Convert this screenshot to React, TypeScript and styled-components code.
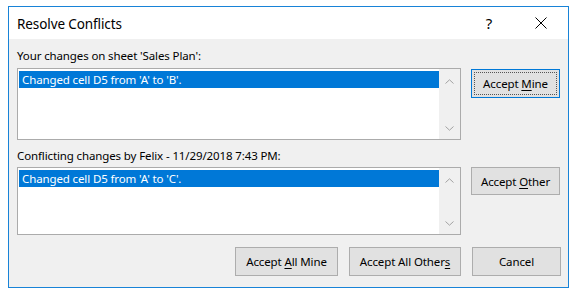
import React from "react";
import styled, { createGlobalStyle } from "styled-components";

const Global = createGlobalStyle`
  html, body { margin: 0; padding: 0; background: #ffffff; }
  body { font-family: "Noto Sans", "Open Sans", sans-serif; }
`;

const Window = styled.div`
  margin: 6px 0 0 8px;
  width: 561px;
  height: 282px;
  box-sizing: border-box;
  border: 1px solid #1883d7;
  background: #f0f0f0;
  display: flex;
  flex-direction: column;
`;

const TitleBar = styled.div`
  height: 32px;
  background: #ffffff;
  display: flex;
  align-items: center;
  padding-left: 8px;
  flex-shrink: 0;
`;

const Title = styled.div`
  flex: 1;
  font-size: 13.5px;
  letter-spacing: -0.1px;
  color: #000;
  padding-top: 1px;
`;

const TitleButton = styled.div<{ $w: number }>`
  width: ${(p) => p.$w}px;
  height: 32px;
  display: flex;
  align-items: center;
  justify-content: center;
  font-size: 15px;
  color: #000;
`;

const Body = styled.div`
  flex: 1;
  padding: 9px 7px 0 8px;
  display: flex;
  flex-direction: column;
`;

const Label = styled.div<{ $mt: number }>`
  margin-top: ${(p) => p.$mt}px;
  height: 16px;
  line-height: 16px;
  font-size: 11.5px;
  letter-spacing: -0.12px;
  color: #000;
`;

const Row = styled.div<{ $mt: number }>`
  margin-top: ${(p) => p.$mt}px;
  display: grid;
  grid-template-columns: 444px 89px;
  column-gap: 10px;
  align-items: start;
`;

const ListBox = styled.div<{ $h: number }>`
  height: ${(p) => p.$h}px;
  box-sizing: border-box;
  border: 1px solid #ababab;
  background: #ffffff;
  display: flex;
`;

const ListItems = styled.div`
  flex: 1;
  padding: 2px 0 0 1px;
`;

const Item = styled.div`
  height: 17px;
  line-height: 17px;
  background: #0078d7;
  color: #ffffff;
  font-size: 11.5px;
  letter-spacing: -0.12px;
  padding-left: 3px;
  white-space: nowrap;
`;

const ScrollBar = styled.div`
  width: 21px;
  background: #f0f0f0;
  display: flex;
  flex-direction: column;
  justify-content: space-between;
  align-items: center;
  padding: 10px 0 8px;
`;

const Button = styled.button<{ $w?: number; $h?: number; $default?: boolean }>`
  width: ${(p) => (p.$w ? `${p.$w}px` : "100%")};
  height: ${(p) => p.$h ?? 29}px;
  box-sizing: border-box;
  margin: 0;
  padding: 0;
  border: 1px solid ${(p) => (p.$default ? "#0078d7" : "#adadad")};
  background: #e1e1e1;
  font-family: "Noto Sans", "Open Sans", sans-serif;
  font-size: 11.5px;
  letter-spacing: -0.12px;
  color: #000;
  position: relative;
  display: flex;
  align-items: center;
  justify-content: center;
  u { text-decoration: underline; text-underline-offset: 2px; }
`;

const Focus = styled.span`
  position: absolute;
  inset: 2px;
  border: 1px dotted #555;
  pointer-events: none;
`;

const Footer = styled.div`
  margin-top: 12px;
  display: flex;
  justify-content: flex-end;
  gap: 11px;
`;

const Chevron = ({ up }: { up?: boolean }) => (
  <svg width="9" height="5" viewBox="0 0 9 5">
    <path
      d={up ? "M0.5 4.5 L4.5 0.8 L8.5 4.5" : "M0.5 0.5 L4.5 4.2 L8.5 0.5"}
      fill="none"
      stroke="#a3a3a3"
      strokeWidth="1"
    />
  </svg>
);

const List = ({ h, text }: { h: number; text: string }) => (
  <ListBox $h={h}>
    <ListItems>
      <Item>{text}</Item>
    </ListItems>
    <ScrollBar>
      <Chevron up />
      <Chevron />
    </ScrollBar>
  </ListBox>
);

export default function App() {
  return (
    <>
      <Global />
      <Window>
        <TitleBar>
          <Title>Resolve Conflicts</Title>
          <TitleButton $w={58}>?</TitleButton>
          <TitleButton $w={46}>
            <svg width="12" height="12" viewBox="0 0 12 12">
              <path d="M0.5 0.5 L11.5 11.5 M11.5 0.5 L0.5 11.5" stroke="#000" strokeWidth="1" />
            </svg>
          </TitleButton>
          <TitleButton $w={4} />
        </TitleBar>
        <Body>
          <Label $mt={0}>Your changes on sheet 'Sales Plan':</Label>
          <Row $mt={4}>
            <List h={72} text="Changed cell D5 from 'A' to 'B'." />
            <div style={{ paddingTop: 1 }}>
              <Button $default>
                <Focus />
                Accept&nbsp;<u>M</u>ine
              </Button>
            </div>
          </Row>
          <Label $mt={8}>Conflicting changes by Felix - 11/29/2018 7:43 PM:</Label>
          <Row $mt={3}>
            <List h={68} text="Changed cell D5 from 'A' to 'C'." />
            <Button $h={28}>
              Accept&nbsp;<u>O</u>ther
            </Button>
          </Row>
          <Footer>
            <Button $w={103}>
              Accept&nbsp;<u>A</u>ll Mine
            </Button>
            <Button $w={112}>
              Accept All Other<u>s</u>
            </Button>
            <Button $w={89}>Cancel</Button>
          </Footer>
        </Body>
      </Window>
    </>
  );
}
